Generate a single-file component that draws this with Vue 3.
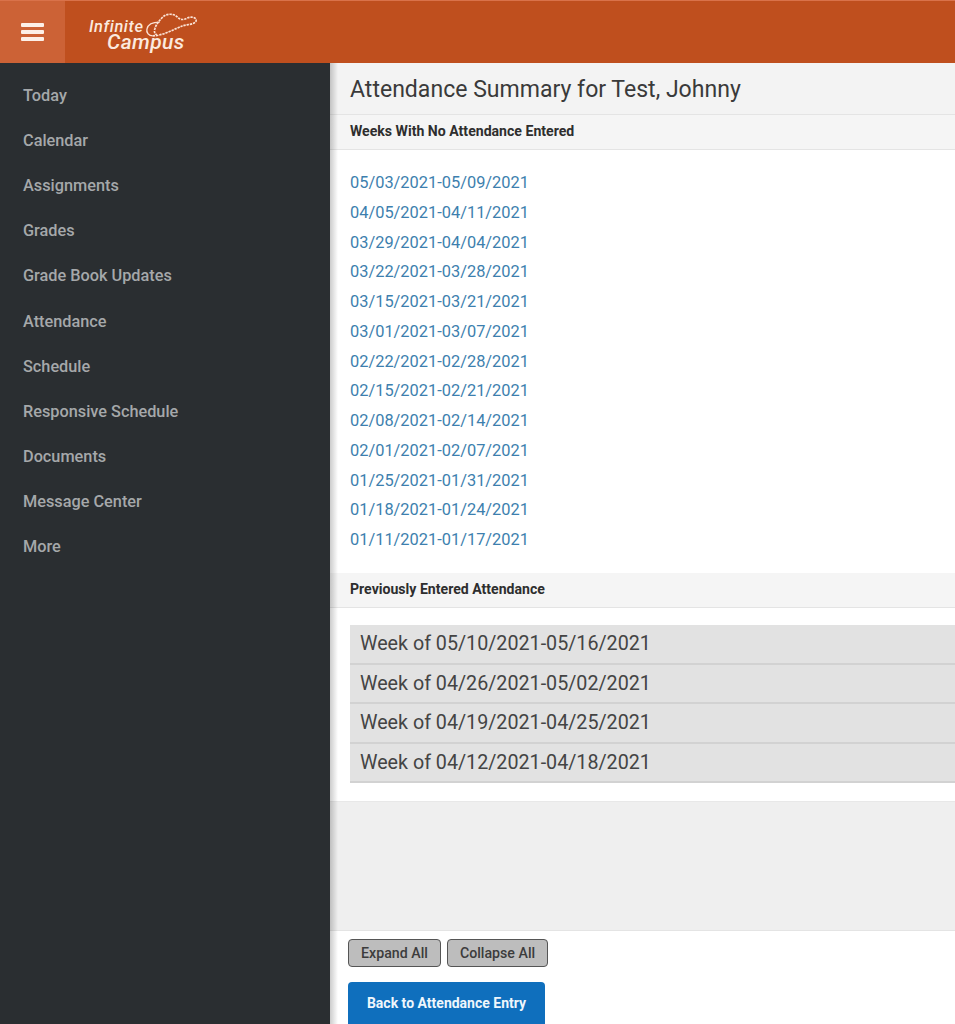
<template>
  <div class="page">
    <header class="topbar">
      <button class="menu-btn" aria-label="Menu">
        <span></span><span></span><span></span>
      </button>
      <div class="logo">
        <span class="logo__top">Infinite</span>
        <span class="logo__bottom">Campus</span>
        <svg class="logo__mark" viewBox="0 0 54 28" fill="none" stroke="#fbe3d6">
          <path d="M8 24C18 24 30 17 38 14C43 12 50 13 52 9C53 5 47 4 43 6C39 8 36 8 33 5C29 1 22 1 18 5C14 9 11 13 10 17C9 20 10 22 12 23" stroke-width="1.7" stroke-dasharray="2.4 0.9" />
          <path d="M15 10C9 10 3 12 2 17C1 21 4 24 8 24" stroke-width="1.4" />
        </svg>
      </div>
    </header>

    <div class="body">
      <nav class="sidebar">
        <a v-for="item in navItems" :key="item" class="sidebar__item">{{ item }}</a>
      </nav>

      <main class="content">
        <h1 class="title">Attendance Summary for Test, Johnny</h1>

        <h2 class="section-head">Weeks With No Attendance Entered</h2>
        <div class="missing">
          <a v-for="week in missingWeeks" :key="week" class="missing__link">{{ week }}</a>
        </div>

        <h2 class="section-head">Previously Entered Attendance</h2>
        <div class="entered">
          <div v-for="week in enteredWeeks" :key="week" class="entered__row">Week of {{ week }}</div>
        </div>

        <div class="spacer"></div>

        <footer class="actions">
          <div class="actions__small">
            <button class="btn-small btn-small--expand">Expand All</button>
            <button class="btn-small btn-small--collapse">Collapse All</button>
          </div>
          <button class="btn-primary">Back to Attendance Entry</button>
        </footer>
      </main>
    </div>
  </div>
</template>

<script setup>
const navItems = [
  'Today',
  'Calendar',
  'Assignments',
  'Grades',
  'Grade Book Updates',
  'Attendance',
  'Schedule',
  'Responsive Schedule',
  'Documents',
  'Message Center',
  'More',
];

const missingWeeks = [
  '05/03/2021-05/09/2021',
  '04/05/2021-04/11/2021',
  '03/29/2021-04/04/2021',
  '03/22/2021-03/28/2021',
  '03/15/2021-03/21/2021',
  '03/01/2021-03/07/2021',
  '02/22/2021-02/28/2021',
  '02/15/2021-02/21/2021',
  '02/08/2021-02/14/2021',
  '02/01/2021-02/07/2021',
  '01/25/2021-01/31/2021',
  '01/18/2021-01/24/2021',
  '01/11/2021-01/17/2021',
];

const enteredWeeks = [
  '05/10/2021-05/16/2021',
  '04/26/2021-05/02/2021',
  '04/19/2021-04/25/2021',
  '04/12/2021-04/18/2021',
];
</script>

<style>
html, body {
  margin: 0;
  overflow: hidden;
}
</style>

<style scoped>
.page {
  width: 955px;
  height: 1024px;
  display: flex;
  flex-direction: column;
  overflow: hidden;
  font-family: Roboto, "Liberation Sans", sans-serif;
}

.topbar {
  flex: none;
  height: 63px;
  box-sizing: border-box;
  border-top: 1px solid #d9724a;
  display: flex;
  background: #bf4f1e;
}
.menu-btn {
  width: 65px;
  padding: 0;
  border: 0;
  background: #cc6236;
  display: flex;
  flex-direction: column;
  align-items: center;
  justify-content: center;
  gap: 3px;
}
.menu-btn span {
  width: 23px;
  height: 4px;
  border-radius: 1px;
  background: #fdf0e8;
}
.logo {
  position: relative;
  width: 135px;
  color: #fbe9df;
}
.logo__top {
  position: absolute;
  left: 24px;
  top: 21px;
  font-size: 16.4px;
  line-height: 10px;
  font-style: italic;
  font-weight: 500;
  letter-spacing: 0.6px;
}
.logo__bottom {
  position: absolute;
  left: 42px;
  top: 31px;
  font-size: 21px;
  line-height: 20px;
  font-style: italic;
  font-weight: 500;
  letter-spacing: 0.4px;
}
.logo__mark {
  position: absolute;
  left: 80px;
  top: 11px;
  width: 53px;
  height: 28px;
}

.body {
  flex: 1;
  min-height: 0;
  display: flex;
}

.sidebar {
  flex: none;
  width: 330px;
  box-sizing: border-box;
  padding-top: 9.6px;
  display: flex;
  flex-direction: column;
  background: #2a2e31;
}
.sidebar__item {
  height: 45.2px;
  line-height: 45.2px;
  padding-left: 23px;
  font-size: 16.3px;
  font-weight: 500;
  color: #a5a8aa;
}

.content {
  position: relative;
  flex: 1;
  min-width: 0;
  display: flex;
  flex-direction: column;
  background: #fff;
}
/* soft shadow the sidebar throws over the whole panel */
.content::before {
  content: "";
  position: absolute;
  left: 0;
  top: 0;
  bottom: 0;
  width: 8px;
  background: linear-gradient(to right, rgba(0, 0, 0, 0.2), rgba(0, 0, 0, 0));
}
.title {
  margin: 0;
  height: 52px;
  box-sizing: border-box;
  padding: 13px 0 0 20px;
  font-size: 23.05px;
  line-height: 27px;
  font-weight: 400;
  color: #3a3a3a;
  background: #f3f3f3;
  border-bottom: 1px solid #e4e4e4;
}
.section-head {
  margin: 0;
  height: 35px;
  box-sizing: border-box;
  padding-left: 20px;
  font-size: 14.1px;
  line-height: 33px;
  font-weight: 700;
  color: #2e2e2e;
  background: #f5f5f5;
  border-bottom: 1px solid #e4e4e4;
}
.missing {
  height: 423px;
  box-sizing: border-box;
  padding: 18px 0 0 20px;
  display: flex;
  flex-direction: column;
}
.missing__link {
  height: 29.75px;
  line-height: 29.75px;
  font-size: 16.4px;
  color: #3d7fae;
}
.entered {
  height: 194px;
  box-sizing: border-box;
  padding: 17px 0 0 20px;
  border-bottom: 1px solid #e8e8e8;
}
.entered__row {
  height: 39.6px;
  box-sizing: border-box;
  padding-left: 10px;
  line-height: 38.5px;
  font-size: 19.7px;
  color: #444;
  background: #e2e2e2;
  border-bottom: 2px solid #d2d2d2;
}
.spacer {
  flex: 1;
  background: #efefef;
}
.actions {
  flex: none;
  height: 94px;
  box-sizing: border-box;
  padding: 8px 0 0 18px;
  border-top: 1px solid #e4e4e4;
  background: #fff;
}
.actions__small {
  display: flex;
  gap: 6px;
}
.btn-small {
  height: 28px;
  padding: 0;
  border: 1px solid #555;
  border-radius: 4px;
  background: #bdbdbd;
  font: 500 14.2px Roboto, "Liberation Sans", sans-serif;
  color: #3c3c3c;
}
.btn-small--expand {
  width: 93px;
}
.btn-small--collapse {
  width: 101px;
}
.btn-primary {
  display: block;
  margin-top: 15px;
  width: 197px;
  height: 46px;
  padding: 0 0 4px;
  border: 0;
  border-radius: 4px 4px 0 0;
  background: #0f6fbd;
  font: 700 14px Roboto, "Liberation Sans", sans-serif;
  color: #eef6fc;
}
</style>
